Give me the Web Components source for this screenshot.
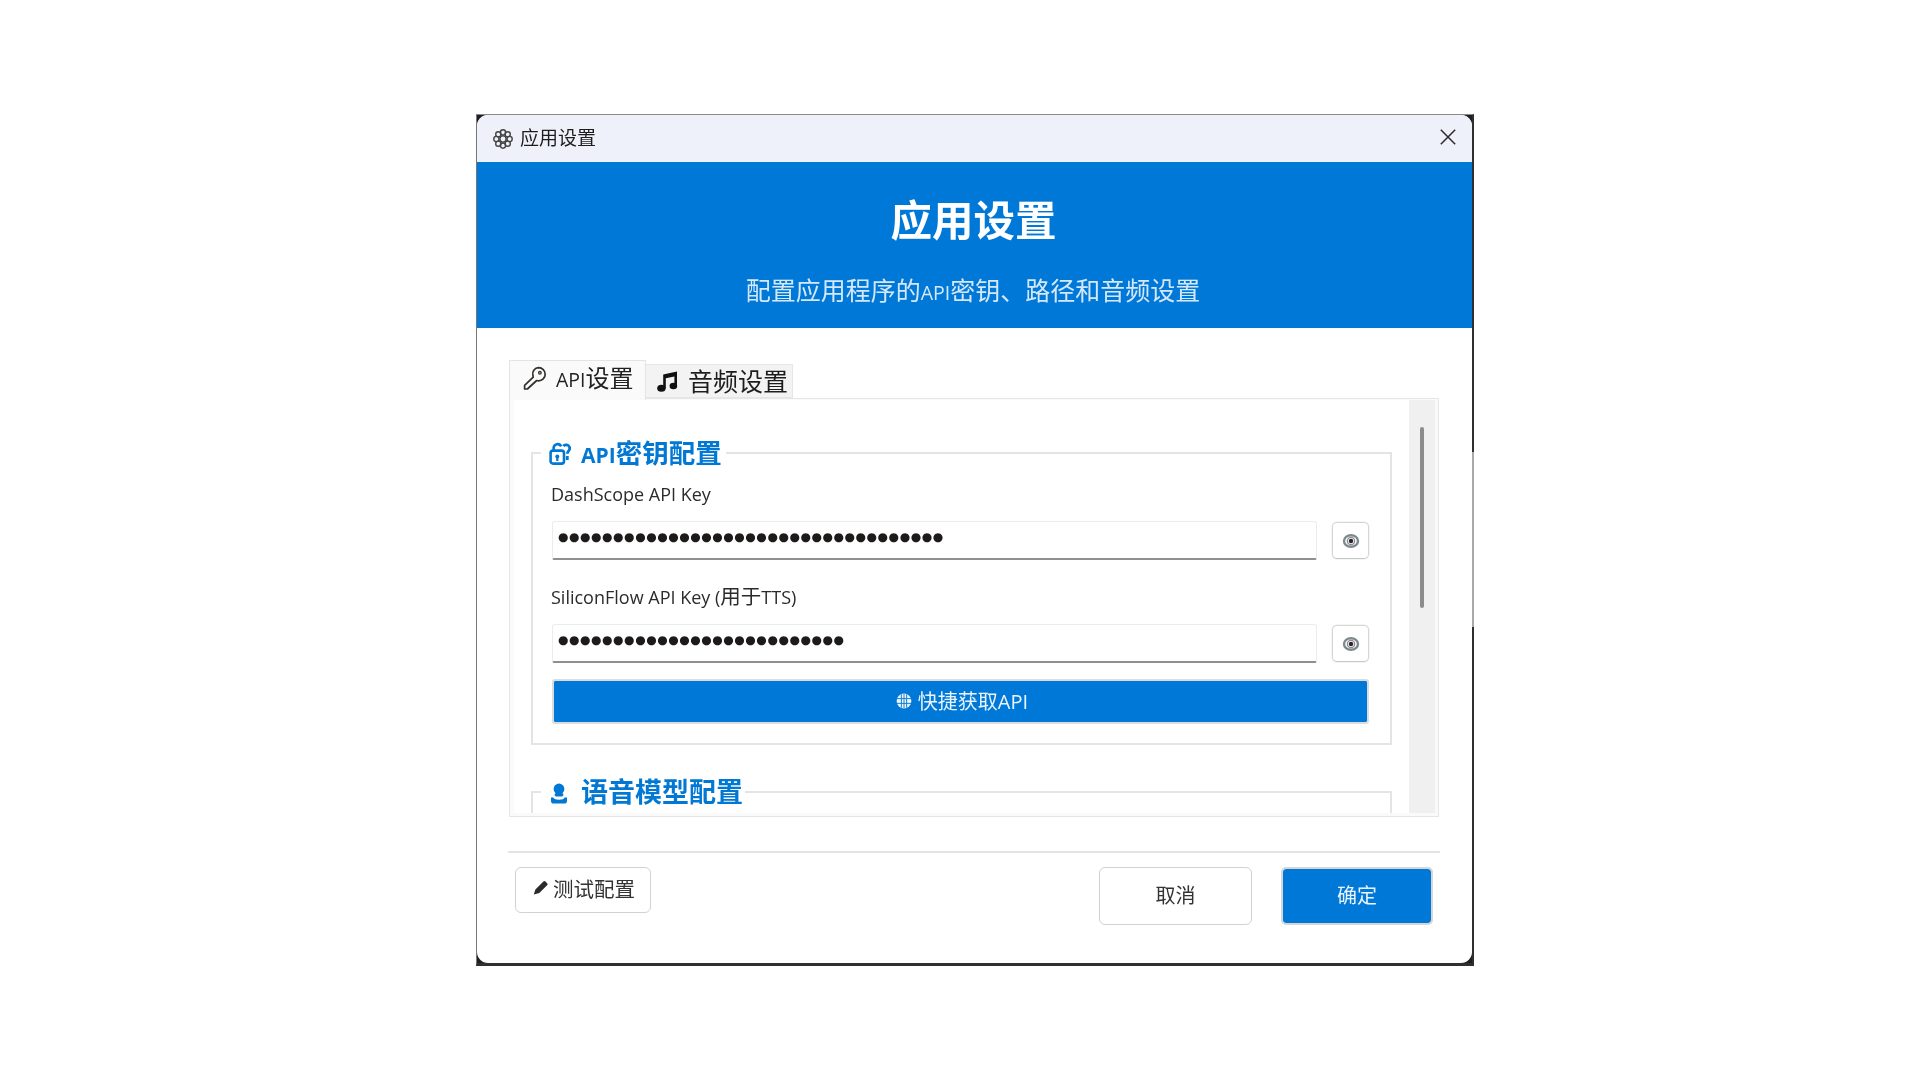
<!DOCTYPE html>
<html lang="zh-CN">
<head>
<meta charset="utf-8">
<title>应用设置</title>
<style>
html,body{margin:0;padding:0;background:#fff;}
body{height:1080px;box-sizing:border-box;padding:114px 0 0 476px;font-family:"Open Sans","Noto Sans CJK SC",sans-serif;color:#222;overflow:hidden;}
</style>
</head>
<body>
<settings-window>
  <title-bar slot="title">应用设置</title-bar>
  <hero-banner slot="hero" heading="应用设置">配置应用程序的<span style="font-size:19.5px">API</span>密钥、路径和音频设置</hero-banner>
  <tab-strip slot="tabs"></tab-strip>
  <settings-pane slot="pane">
    <group-box icon="lock"><span style="font-size:21px">API</span>密钥配置
      <key-field slot="fields" count="35">DashScope API Key</key-field>
      <key-field slot="fields" count="26" second="1">SiliconFlow API Key (<span style="font-size:20.5px">用于</span>TTS)</key-field>
      <quick-button slot="fields">快捷获取API</quick-button>
    </group-box>
    <group-box icon="mic">语音模型配置</group-box>
  </settings-pane>
  <dialog-footer slot="footer"></dialog-footer>
</settings-window>

<script>
const ICONS = {
  gear:`<svg width="22" height="22" viewBox="0 0 22 22" fill="none" stroke="#444"><circle cx="11" cy="11" r="3.1" stroke-width="1.4"/><g stroke-width="1.4"><circle cx="11" cy="4.4" r="2.6"/><circle cx="15.7" cy="6.3" r="2.6"/><circle cx="17.6" cy="11" r="2.6"/><circle cx="15.7" cy="15.7" r="2.6"/><circle cx="11" cy="17.6" r="2.6"/><circle cx="6.3" cy="15.7" r="2.6"/><circle cx="4.4" cy="11" r="2.6"/><circle cx="6.3" cy="6.3" r="2.6"/></g></svg>`,
  close:`<svg width="16" height="16" viewBox="0 0 16 16" stroke="#2b2b2b" stroke-width="1.5" fill="none"><path d="M.8.8 15.2 15.2M15.2.8.8 15.2"/></svg>`,
  key:`<svg width="24" height="24" viewBox="0 0 24 24" fill="none" stroke="#33302e" stroke-width="1.7" stroke-linejoin="round"><path d="M15.6 1.6a6.6 6.6 0 0 1 6.6 6.6c0 3.7-3 6.6-6.6 6.6-.7 0-1.3-.1-1.9-.3L4.4 23H1.6v-3.6l8.6-8.3c-.2-.8-.3-1.4-.3-2.1a6 6 0 0 1 5.7-7.4Z"/><circle cx="16.9" cy="6.8" r="1.3" stroke-width="1.3"/></svg>`,
  music:`<svg width="21" height="21" viewBox="0 0 21 21" fill="#111"><path d="M6.2 3.4 20 .6v14.600h-2.600V5.400L8.800 7.200v10.400H6.200Z"/><ellipse cx="4.400" cy="17.200" rx="4.200" ry="3.500"/><ellipse cx="16.400" cy="15" rx="3.800" ry="3.200"/></svg>`,
  lock:`<svg width="23" height="23" viewBox="0 0 23 23" fill="none" stroke="#0078d4" stroke-width="2.600"><rect x="1.600" y="8.600" width="13.400" height="13" rx="2.400"/><path d="M4.600 8.600V6a4 4 0 0 1 7.600-1.600"/><circle cx="8.300" cy="14.600" r="2" fill="#0078d4" stroke="none"/><rect x="7.200" y="15" width="2.200" height="4" fill="#0078d4" stroke="none"/><path d="M14.400 4.200a3.500 3.500 0 1 1 5.600 4.200c-.7.9-1.500 1.300-1.600 3.400" stroke-width="2.800"/><path d="M18.300 14v4" stroke-width="2.800"/></svg>`,
  mic:`<svg width="18" height="22" viewBox="0 0 18 22" fill="#0078d4" style="margin-top:3px"><circle cx="9" cy="6" r="5.400"/><rect x="4.600" y="10" width="8.800" height="3.400" rx="1.600"/><path d="M1 14.600h2.400c.5 1.600 2.600 2.200 5.600 2.200s5.100-.6 5.600-2.200H17v3.400c0 1.600-1 2.600-2.600 2.600H3.600C2 20.600 1 19.600 1 18Z"/></svg>`,
  globe:`<svg width="16" height="16" viewBox="0 0 16 16" fill="#e9f3fc"><circle cx="8" cy="8" r="7.400"/><g stroke="#0078d4" stroke-width=".9" fill="none"><path d="M.8 5.600h14.400M.8 10.400h14.400M5.400 1.200v13.600M8 .8v14.400M10.600 1.200v13.600"/></g></svg>`,
  eye:`<svg width="18" height="16" viewBox="0 0 18 16" fill="none"><ellipse cx="9" cy="8" rx="7" ry="5.800" stroke="#7d8a8c" stroke-width="2.400"/><circle cx="9" cy="8" r="3.600" stroke="#8f8a90" stroke-width="1.400"/><circle cx="9" cy="8" r="2.200" fill="#2b2430"/></svg>`,
  pencil:`<svg width="15" height="14" viewBox="0 0 15 14" fill="#2c2a2a"><path d="M10.400.6a1.500 1.500 0 0 1 2.100 0l1.600 1.600a1.500 1.500 0 0 1 0 2.100L6.300 12 .8 13.400 2.400 8.400Z"/></svg>`
};

class Base extends HTMLElement {
  constructor(){super();this.attachShadow({mode:"open"});}
  connectedCallback(){this.shadowRoot.innerHTML=this.render();}
}
const FONT = `"Open Sans","Noto Sans CJK SC",sans-serif`;

customElements.define("settings-window", class extends Base{render(){return `
<style>
:host{display:block;position:relative;width:995px;height:848px;background:#1f1f1f;border-style:solid;border-color:#8a8a8a #2f2f2f #2f2f2f #777;border-width:1px 2px 3px 1px;font-family:${FONT};filter:blur(.35px);}
.shade{position:absolute;right:-2px;top:337px;width:2px;height:175px;background:#a9a9a9;}
.surface{height:100%;background:#fff;border-radius:11px;overflow:hidden;display:flex;flex-direction:column;}
.content{padding:32px 0 0 32px;}
</style>
<div class="surface">
  <slot name="title"></slot><slot name="hero"></slot>
  <div class="content"><slot name="tabs"></slot><slot name="pane"></slot></div>
  <slot name="footer"></slot>
</div><div class="shade"></div>`;}});

customElements.define("title-bar", class extends Base{render(){return `
<style>
:host{display:flex;align-items:center;height:47px;flex:none;background:#eef1f9;padding:0 16px 0 15px;font-size:19px;color:#1d1d1d;gap:6px;}
svg{display:block}.t{flex:1;line-height:47px;}
.c{margin-top:-3px;}
</style>
${ICONS.gear}<span class="t"><slot></slot></span><span class="c">${ICONS.close}</span>`;}});

customElements.define("hero-banner", class extends Base{render(){return `
<style>
:host{display:block;flex:none;height:166px;background:#0078d7;text-align:center;color:#fff;box-sizing:border-box;padding-top:30px;}
h1{margin:0;padding-right:2px;font-size:41.500px;line-height:56px;font-weight:700;}
p{margin:23px 3px 0 0;font-size:25px;line-height:38px;color:#d5e8f9;}
</style>
<h1>${this.getAttribute("heading")}</h1><p><slot></slot></p>`;}});

customElements.define("tab-strip", class extends Base{render(){return `
<style>
:host{display:flex;align-items:flex-start;height:40px;position:relative;z-index:1;margin-bottom:-2px;}
.tab{box-sizing:border-box;display:flex;align-items:center;}
.a{width:137px;height:40px;background:#fafafa;border:1px solid #e4e4e4;border-bottom:none;font-size:24px;padding:0 0 5px 13px;gap:9px;color:#222;}
.a i{font-style:normal;font-size:19.500px;}
.a span{margin-bottom:3px;}
.b{width:147px;height:34px;margin-top:4px;background:#f3f3f3;border:1px solid #e6e6e6;border-left:none;font-size:25px;padding-left:10px;gap:10px;color:#1d1d1d;}
.b span{margin-bottom:2px;}
.b svg{margin-left:1px}
svg{display:block}
</style>
<div class="tab a">${ICONS.key}<span><i>API</i>设置</span></div>
<div class="tab b">${ICONS.music}<span>音频设置</span></div>`;}});

customElements.define("settings-pane", class extends Base{render(){return `
<style>
:host{display:flex;box-sizing:border-box;width:930px;height:419px;border:1px solid #e6e6e6;background:#fafafa;padding:1px 3px 3px 4px;}
.view{flex:1;min-width:0;overflow:hidden;background:#fff;padding:36px 17px 0 17px;}
.bar{flex:none;width:26px;background:#f0f0f0;padding-top:27px;box-sizing:border-box;display:flex;justify-content:center;}
.thumb{width:4px;height:181px;background:#8c8c8c;border-radius:2px;}
</style>
<div class="view"><slot></slot></div><div class="bar"><div class="thumb"></div></div>`;}});

customElements.define("group-box", class extends Base{render(){
const isLock=this.getAttribute("icon")==="lock";
return `
<style>
:host{display:block;margin-bottom:30px;}
fieldset{margin:0;border:2px solid #e4e4e4;padding:0 21px 19px 19px;min-height:${isLock?"0":"60px"};min-width:0;}
legend{margin-left:-11px;padding:0 ${isLock?4:2}px 0 ${isLock?8:9}px;display:flex;align-items:center;height:34px;font-size:${isLock?26.5:27}px;font-weight:700;color:#0078d4;white-space:nowrap;gap:${isLock?9:13}px;}
legend span{margin-bottom:4px;}
svg{display:block}
</style>
<fieldset><legend>${ICONS[this.getAttribute("icon")]}<span><slot></slot></span></legend><slot name="fields"></slot></fieldset>`;}});

customElements.define("key-field", class extends Base{render(){
const second=this.hasAttribute("second");
return `
<style>
:host{display:block;}
.l{font-size:18px;line-height:28px;height:28px;color:#2b2b2b;margin:${second?"22px":"10px"} 0 ${second?"14px":"13px"} -1px;}
.r{display:flex;align-items:center;gap:15px;}
.i{box-sizing:border-box;width:766px;height:39px;background:#fff;border:1px solid #ececec;border-bottom:2px solid #8f8f8f;border-radius:3px 3px 2px 2px;padding:0 0 0 5px;font-family:"DejaVu Sans",sans-serif;font-size:12px;line-height:30px;color:#1e1a1a;letter-spacing:.55px;white-space:nowrap;overflow:hidden;}
.e{box-sizing:border-box;width:37px;height:37px;border:1px solid #d6d6d6;border-bottom-color:#c6c6c6;border-radius:5px;background:#fff;display:flex;align-items:center;justify-content:center;box-shadow:0 0 0 .5px #ececec;}
svg{display:block}
</style>
<div class="l"><slot></slot></div>
<div class="r"><div class="i">${"●".repeat(+this.getAttribute("count"))}</div><div class="e">${ICONS.eye}</div></div>`;}});

customElements.define("quick-button", class extends Base{render(){return `
<style>
:host{display:flex;box-sizing:border-box;width:817px;height:45px;margin:16px 0 0 0;border:2.500px solid #dcdcdc;border-radius:3px;background:#0078d7;color:#e9f3fc;font-size:20px;align-items:center;justify-content:center;gap:6px;padding:0 0 2px 3px;background-clip:padding-box;}
svg{display:block}
</style>
${ICONS.globe}<slot></slot>`;}});

customElements.define("dialog-footer", class extends Base{render(){return `
<style>
:host{display:flex;align-items:flex-start;flex:none;box-sizing:border-box;width:932px;margin:34px 0 0 31px;border-top:2px solid #e4e4e4;padding:14px 7px 0 7px;}
button{box-sizing:border-box;font:inherit;font-family:${FONT};margin:0;display:flex;align-items:center;justify-content:center;border:1.500px solid #d2d2d2;border-radius:6px;background:#fff;color:#333;}
.t{width:136px;height:46px;font-size:20.500px;gap:5px;padding:0 0 4px 2px;}
.s{flex:1;}
.x{width:153px;height:58px;font-size:20px;font-weight:400;padding-bottom:4px;}
.o{margin-left:29px;width:152px;background:#0078d7;color:#eaf4fd;background-clip:padding-box;border-color:#d6d6d6;border-width:2.500px;border-radius:5px;}
svg{display:block}
</style>
<button class="t">${ICONS.pencil}<span>测试配置</span></button><div class="s"></div>
<button class="x">取消</button><button class="x o">确定</button>`;}});
</script>
</body>
</html>
